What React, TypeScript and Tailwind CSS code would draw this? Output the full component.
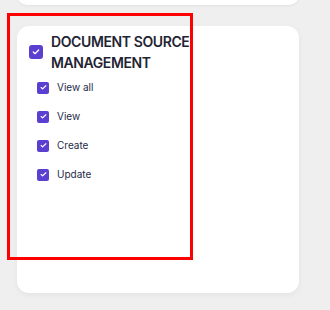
import { Check } from 'lucide-react'

const permissions = ['View all', 'View', 'Create', 'Update']

function Box({ size }: { size: 'lg' | 'sm' }) {
  return (
    <span
      className={
        size === 'lg'
          ? 'w-[14px] h-[14px] shrink-0 rounded-[3px] bg-[#5a3fd0] flex items-center justify-center'
          : 'w-[12px] h-[12px] shrink-0 rounded-[2px] bg-[#5a3fd0] flex items-center justify-center'
      }
    >
      <Check className={size === 'lg' ? 'w-[8px] h-[8px] text-white' : 'w-[7px] h-[7px] text-white'} strokeWidth={4} />
    </span>
  )
}

export default function App() {
  return (
    <div className="relative w-[330px] h-[310px] overflow-hidden bg-[#efefef] font-['Inter',sans-serif]">
      <div className="ml-[17px] w-[282px] h-[20px] -mt-[15px] rounded-xl bg-white shadow-[0_1px_3px_rgba(0,0,0,0.06)]" />

      <div className="ml-[17px] mt-[21px] w-[282px] h-[267px] rounded-xl bg-white shadow-[0_2px_6px_rgba(0,0,0,0.05)] pt-[5px]">
        <div className="flex items-center gap-[8px] pl-[12px]">
          <Box size="lg" />
          <h2 className="text-[14px] leading-[21px] font-semibold tracking-[-0.4px] text-[#1f2433] w-[145px]">
            DOCUMENT SOURCE MANAGEMENT
          </h2>
        </div>
        <ul className="pl-[20px]">
          {permissions.map((p) => (
            <li key={p} className="h-[29px] flex items-center gap-[8px]">
              <Box size="sm" />
              <span className="text-[10px] text-[#1e2a4a]">{p}</span>
            </li>
          ))}
        </ul>
      </div>

      <div className="absolute left-[7px] top-[13px] w-[186px] h-[247px] border-[3px] border-[#ff0000]" />
    </div>
  )
}
